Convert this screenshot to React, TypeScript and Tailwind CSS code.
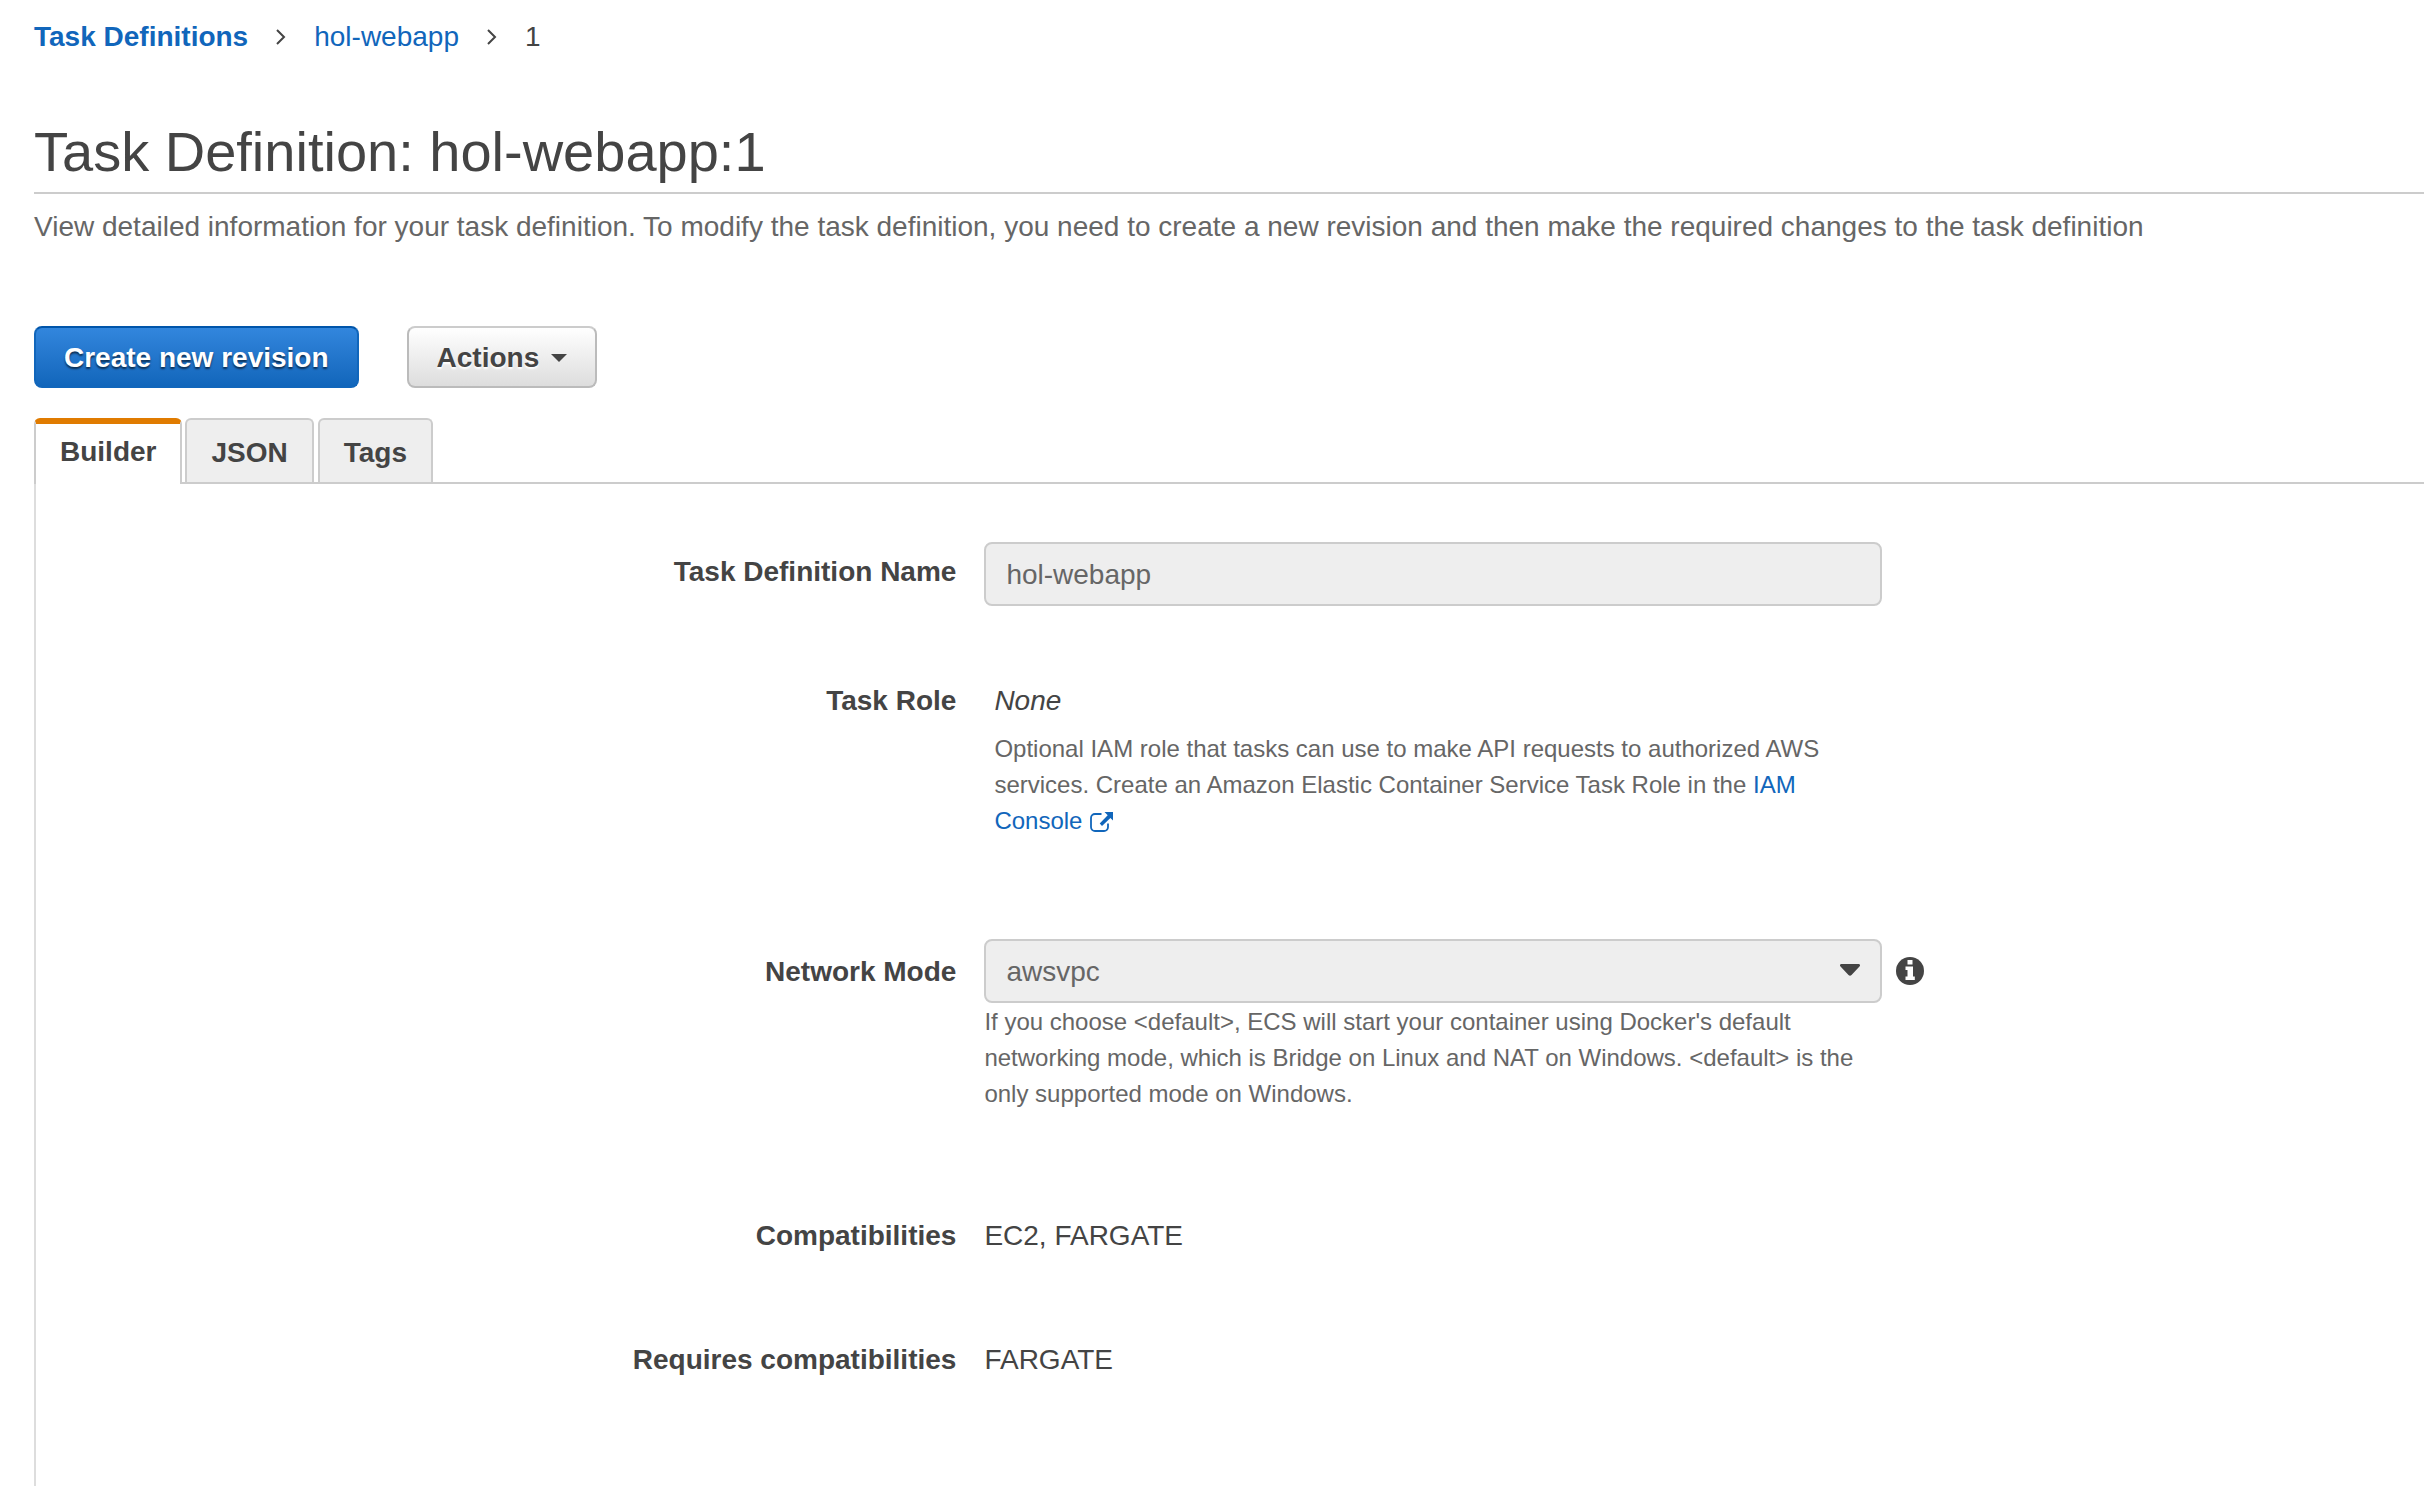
import type { ReactNode } from "react";

function Chevron() {
  return (
    <svg aria-hidden="true" viewBox="0 0 10 16" className="h-4 w-[10px]" fill="none" stroke="#444444" strokeWidth="2">
      <path d="M1 1 8 8l-7 7" />
    </svg>
  );
}

function ExternalIcon() {
  return (
    <svg aria-hidden="true" viewBox="0 0 24 20" className="ml-2 inline h-5 w-6 align-[-3px]">
      <path
        d="M11.500 2H5a4 4 0 0 0-4 4v9a4 4 0 0 0 4 4h9a4 4 0 0 0 4-4v-3.500"
        fill="none"
        stroke="currentColor"
        strokeWidth="1.800"
      />
      <path d="M14.500 0H23v8.500l-2.600-2.600-8.400 8-2.300-2.300 8-8.400z" fill="currentColor" />
    </svg>
  );
}

function InfoIcon() {
  return (
    <svg aria-hidden="true" viewBox="0 0 28 28" className="size-7">
      <circle cx="14" cy="14" r="14" fill="#444444" />
      <path d="M11.500 3h5v4.500h-5zM9.500 9.500h7.500v10h1.800V23H9.500v-3.500h2V13h-2z" fill="#ffffff" />
    </svg>
  );
}

function Row({ label, htmlFor, className, labelClass, children }: {
  label: string;
  htmlFor?: string;
  className: string;
  labelClass?: string;
  children: ReactNode;
}) {
  return (
    <div className={"grid grid-cols-[39fr_61fr] gap-7 " + className}>
      <div className={"text-right font-bold " + (labelClass ?? "")}>
        {htmlFor ? <label htmlFor={htmlFor}>{label}</label> : label}
      </div>
      <div>{children}</div>
    </div>
  );
}

export default function App() {
  return (
    <div className="flex min-h-screen flex-col bg-white pl-[34px] font-['Liberation_Sans',Arial,sans-serif] text-[28px] leading-9 text-[#444444]">
      <nav aria-label="Breadcrumb" className="flex items-center pt-[19px]">
        <a href="#definitions" className="font-bold text-[#1166bb]">Task Definitions</a>
        <span className="mx-7"><Chevron /></span>
        <a href="#hol-webapp" className="text-[#1166bb]">hol-webapp</a>
        <span className="mx-7"><Chevron /></span>
        <span>1</span>
      </nav>

      <h1 className="mt-[65px] border-b-2 border-[#cccccc] pb-2 text-[56px] leading-[64px]">
        Task Definition: hol-webapp:1
      </h1>
      <p className="mt-[15px] text-[#666666]">
        View detailed information for your task definition. To modify the task definition, you need to create a new revision and then make the required changes to the task definition
      </p>

      <div className="mt-[81px] flex gap-12">
        <button type="button" className="h-[62px] rounded-lg border-2 border-[#1166bb] border-t-[#0055aa] bg-linear-to-b from-[#3286dd] to-[#1166bb] px-7 pt-[2px] font-bold text-white [text-shadow:0_2px_2px_#00000099]">
          Create new revision
        </button>
        <button type="button" className="flex h-[62px] items-center gap-3 rounded-lg border-2 border-[#bbbbbb] border-t-[#cccccc] bg-linear-to-b from-white to-[#dddddd] px-7 pt-[2px] font-bold [text-shadow:0_2px_2px_#ffffff]">
          Actions
          <svg aria-hidden="true" viewBox="0 0 16 8" className="h-2 w-4" fill="#444444"><path d="M0 0h16L8 8z" /></svg>
        </button>
      </div>

      <div role="tablist" className="mt-[30px] flex h-[66px] font-bold">
        <button type="button" role="tab" aria-selected="true" className="rounded-t-md border-x-2 border-t-[6px] border-x-[#cccccc] border-t-[#e07b00] px-6 pt-1 pb-2">
          Builder
        </button>
        <div className="flex flex-1 gap-1 border-b-2 border-[#cccccc] pl-[3px]">
          <button type="button" role="tab" aria-selected="false" className="rounded-t-md border-2 border-b-0 border-[#cccccc] bg-[#eeeeee] px-6 pt-1">
            JSON
          </button>
          <button type="button" role="tab" aria-selected="false" className="rounded-t-md border-2 border-b-0 border-[#cccccc] bg-[#eeeeee] px-6 pt-1">
            Tags
          </button>
        </div>
      </div>

      <div role="tabpanel" className="flex-1 border-l-2 border-[#dddddd] pt-[58px] pb-12">
        <Row label="Task Definition Name" htmlFor="name" className="" labelClass="pt-3">
          <input id="name" disabled defaultValue="hol-webapp" className="block h-16 w-full max-w-[898px] rounded-lg border-2 border-[#cccccc] bg-[#eeeeee] px-5 pt-[2px] text-[#666666]" />
        </Row>

        <Row label="Task Role" className="mt-[77px]">
          <div className="max-w-[880px] pl-[10px]">
            <p className="italic">None</p>
            <p className="mt-3 text-[24px] text-[#666666]">
              Optional IAM role that tasks can use to make API requests to authorized AWS services. Create an Amazon Elastic Container Service Task Role in the{" "}
              <a href="#iam" className="text-[#1166bb]">IAM Console<ExternalIcon /></a>
            </p>
          </div>
        </Row>

        <Row label="Network Mode" htmlFor="mode" className="mt-[100px]" labelClass="pt-[15px]">
          <div className="flex items-center gap-[14px]">
            <div className="relative w-full max-w-[898px]">
              <select id="mode" disabled defaultValue="awsvpc" className="block h-16 w-full appearance-none rounded-lg border-2 border-[#cccccc] bg-[#eeeeee] px-5 pt-[2px] text-[#666666] opacity-100">
                <option>awsvpc</option>
              </select>
              <svg aria-hidden="true" viewBox="0 0 20 12" className="pointer-events-none absolute top-[25px] right-[22px] h-3 w-5" fill="#444444">
                <path d="M1 0h18q2 1 .5 2.500l-8 8.500q-1.500 1.500-3 0l-8-8.500Q-1 1 1 0z" />
              </svg>
            </div>
            <button type="button" aria-label="Network mode information"><InfoIcon /></button>
          </div>
          <p className="mt-px max-w-[898px] text-[24px] text-[#666666]">
            If you choose &lt;default&gt;, ECS will start your container using Docker's default networking mode, which is Bridge on Linux and NAT on Windows. &lt;default&gt; is the only supported mode on Windows.
          </p>
        </Row>

        <Row label="Compatibilities" className="mt-[106px]">EC2, FARGATE</Row>
        <Row label="Requires compatibilities" className="mt-[88px]">FARGATE</Row>
      </div>
    </div>
  );
}
